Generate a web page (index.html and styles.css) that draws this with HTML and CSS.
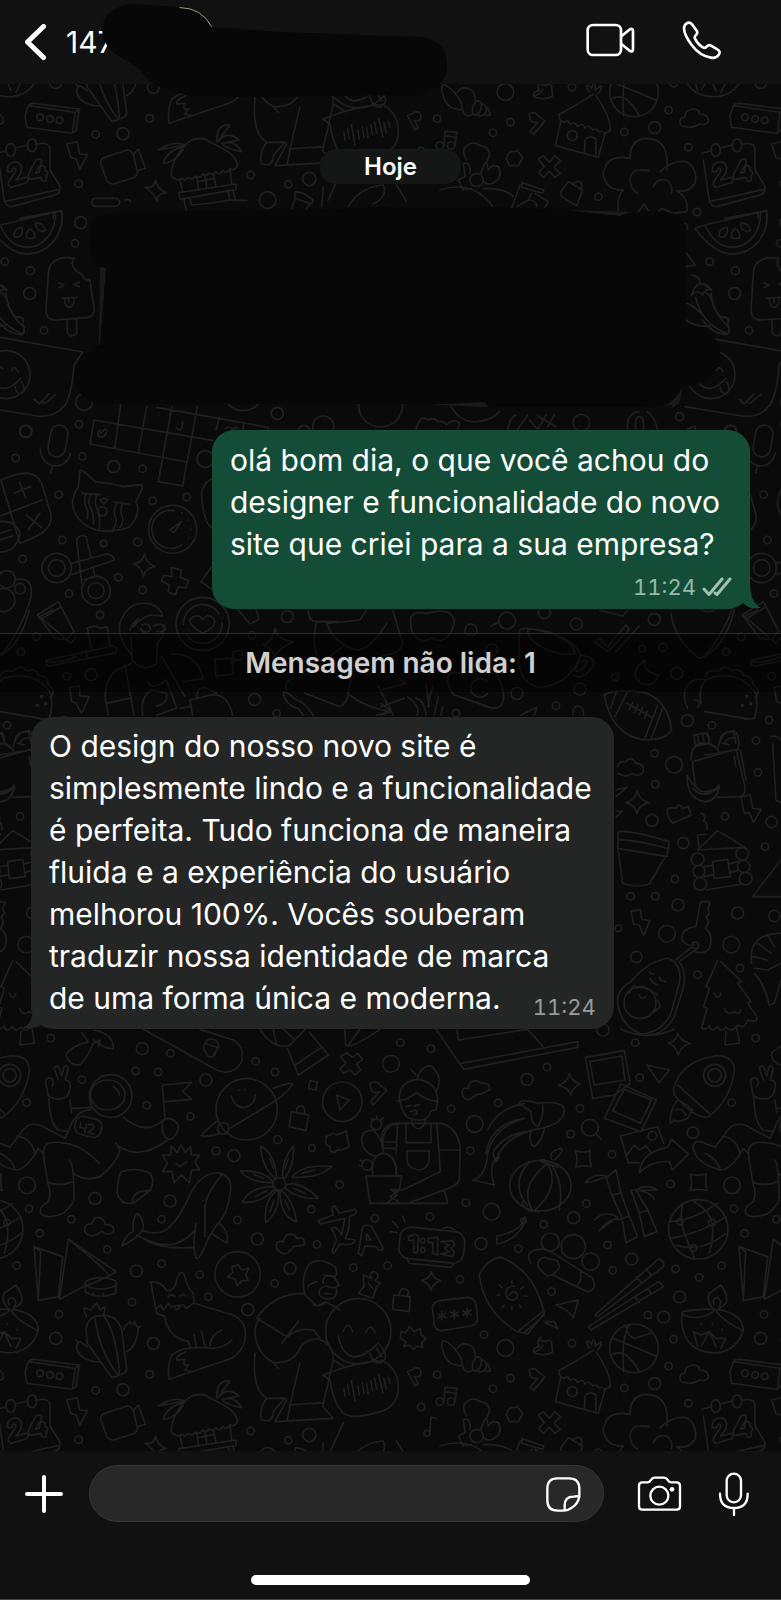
FILE: index.html
```html
<!DOCTYPE html>
<html lang="pt-BR">
<head>
<meta charset="utf-8">
<meta name="viewport" content="width=device-width, initial-scale=1">
<title>Conversa</title>
<link rel="stylesheet" href="styles.css">
</head>
<body>
<header class="topbar">
  <button class="back" type="button" aria-label="Voltar">
    <svg class="icon-back" viewBox="0 0 21 36"><path d="M18.500 2.500L2.500 18l16 15.500"/></svg>
    <span>147</span>
  </button>
  <svg class="cover-name" viewBox="0 0 360 100" aria-hidden="true">
    <path class="ink" d="M3 25C6 11 20 5 32 4L80 7Q103 9 112 27L180 32L320 37C341 39 348 52 347 68C346 83 334 93 310 95L150 97C80 97 58 92 44 75C39 67 31 64 22 58C7 49 0 39 3 25z"/>
    <path class="arc" d="M80 7.500Q102 8 111.500 26.500"/>
  </svg>
  <nav class="calls">
    <button type="button" aria-label="Chamada de vídeo"><svg class="icon-video" viewBox="438 66 153 108"><rect x="446" y="75" width="100" height="90" rx="16"/><path d="M547 109L573 88Q582 84 582 94V146Q582 157 573 153L547 132"/></svg></button>
    <button type="button" aria-label="Chamada de voz"><svg class="icon-phone" viewBox="723 60 123 123"><path d="M740 70Q749 65 756 73L770 92Q774 98 769 104Q762 111 765 116Q773 133 790 143Q796 146 801 139Q806 133 813 137L833 149Q842 154 837 163Q829 176 813 173Q780 168 755 135Q728 99 733 79Q735 73 740 70z"/></svg></button>
  </nav>
</header>

<main class="chat">
  <svg class="wallpaper" aria-hidden="true">
    <defs>
      <g id="tile">
        <g transform="translate(0 200) scale(.3333)">
          <path d="M0 75L184 32Q194 80 160 125Q125 165 75 162Q25 158 -30 85L0 75Q20 120 50 135Q80 147 110 137Q165 110 167 38M42 106Q45 80 67 83Q70 110 50 112Q43 112 42 106zM80 112Q77 92 91 86Q108 99 103 113Q91 120 80 112zM106 70Q128 65 137 90Q122 100 110 85z"/>
          <path d="M222 175C180 168 147 180 145 220L138 330Q138 360 170 360L260 353Q285 350 282 325L270 240Q252 242 244 222Q220 212 216 190zM201 360L202 398Q214 418 230 398V358M176 248L192 256L176 263M238 246L222 253L238 260M186 294L232 292M193 294Q194 322 208 322Q224 320 222 294M207 295V308"/>
          <path d="M0 255L20 270M0 277Q13 280 20 300Q35 350 70 380Q78 400 62 404Q20 400 -8 360M45 352Q70 345 70 365"/>
          <path d="M0 412L248 456L222 496Q216 580 195 615Q165 655 110 648L-60 620M103 598L118 612L146 582M126 606L136 610L166 584"/><circle cx="18" cy="524" r="72"/>
          <path d="M0 500L8 506M34 512Q44 494 54 515M-24 545Q15 590 62 535M45 560Q50 585 65 580Q80 570 64 545"/>
          <rect x="148" y="675" width="52" height="96" rx="26" transform="rotate(10 174 723)"/><path d="M121 745Q122 790 163 798Q200 800 211 760M157 798L152 820"/>
          <path d="M282 660L640 722M270 732L560 786M282 660L270 735M362 615L344 745M440 620L415 758M516 618L475 845L548 858L592 620M470 622L805 682V690M658 652L648 690M732 668L728 690M302 700C320 680 326 685 314 708C296 720 286 700 302 690M530 684Q545 700 548 670V664M675 686Q690 675 698 690Q708 675 716 688"/>
          <path d="M-10 845Q60 815 85 820Q115 825 125 850L152 940Q160 975 125 1000Q90 1020 60 1030L4 845M-4 950L126 900M42 880L92 860M58 846L77 893M78 945L124 982M120 940L84 990M0 965Q45 960 60 1000Q50 1055 0 1056M0 1000L32 990M0 1020L38 1008"/>
          <path d="M240 812Q245 805 285 845Q330 850 370 860L425 854Q433 858 408 905Q425 940 388 982Q330 1000 290 990Q225 970 217 910Q220 880 235 862zM246 880L300 884M258 880Q250 905 258 920T262 955M270 884Q262 910 272 925T280 972M290 885Q282 910 292 930T298 985M340 906L388 912M350 908Q338 935 346 950T340 988M368 910Q358 935 366 950T360 982M300 900Q315 890 322 900L312 912z"/><circle cx="307" cy="934" r="14"/>
          <circle cx="518" cy="988" r="72"/><path d="M522 932A57 57 0 1 0 545 1035M510 990L545 964L522 998zM545 938v1M565 960v1M572 988v1M564 1014v1"/>
          <circle cx="170" cy="1104" r="44"/><circle cx="170" cy="1104" r="25"/><circle cx="288" cy="1172" r="43"/><circle cx="288" cy="1172" r="24"/><path d="M215 1090L320 1062Q342 1065 343 1080L215 1124M245 1150L230 1020Q240 1000 258 1010L272 1070M246 1140L285 1130L280 1106"/>
          <path d="M434 1062Q438 1090 465 1100Q438 1105 430 1128Q425 1098 400 1092Q428 1088 434 1062zM514 1103L545 1110L540 1132L566 1142L558 1164L535 1160L526 1184L504 1176L508 1155L484 1142L492 1126L516 1130z"/>
          <circle cx="20" cy="1138" r="26"/><circle cx="60" cy="1166" r="16"/><circle cx="10" cy="1200" r="35"/><path d="M50 1138Q100 1130 93 1190Q80 1250 30 1330Q10 1360 0 1362M640 835Q605 850 605 885Q610 970 637 985M634 1102L603 1145L640 1170"/>
          <circle cx="242" cy="68" r="18"/><circle cx="225" cy="130" r="11"/><circle cx="14" cy="185" r="11"/><circle cx="91" cy="212" r="12"/><circle cx="89" cy="280" r="18"/><circle cx="132" cy="391" r="11"/><circle cx="252" cy="606" r="25"/><circle cx="76" cy="694" r="18"/><circle cx="237" cy="673" r="11"/><circle cx="247" cy="769" r="11"/><circle cx="47" cy="774" r="11"/><circle cx="341" cy="800" r="18"/><circle cx="428" cy="806" r="11"/><circle cx="616" cy="777" r="25"/><circle cx="176" cy="884" r="11"/><circle cx="458" cy="902" r="11"/><circle cx="560" cy="891" r="11"/><circle cx="187" cy="1020" r="11"/><circle cx="311" cy="1030" r="10"/><circle cx="413" cy="1026" r="12"/><circle cx="68" cy="1077" r="11"/><circle cx="355" cy="1132" r="11"/><circle cx="207" cy="1181" r="11"/><circle cx="428" cy="1170" r="11"/><circle cx="832" cy="640" r="18"/><circle cx="970" cy="680" r="32"/><circle cx="730" cy="570" r="62"/><circle cx="1142" cy="615" r="66"/><circle cx="912" cy="694" r="18"/>
        </g>
        <g transform="translate(381 200) scale(.3333)">
          <path d="M913 155L943 195L915 200M932 226Q955 225 958 250Q940 255 932 286Q950 265 965 285Q970 265 992 270Q985 255 958 250M944 292Q960 370 1040 402Q1050 395 1040 370M990 280Q995 330 1020 352M915 310Q930 310 960 340M915 360Q950 385 990 376M1020 352Q1045 350 1042 366M909 70Q920 68 920 88M875 620Q890 610 897 590"/>
          <circle cx="896" cy="650" r="12"/><circle cx="601" cy="668" r="25"/><circle cx="1050" cy="694" r="18"/><path d="M105 688Q120 640 140 660Q160 650 170 665Q190 660 195 675Q220 655 235 668L230 690M205 610Q235 670 290 665Q335 660 355 635M380 688Q385 655 405 645M410 688L440 645M445 660L470 688L495 645M470 648L525 680M520 645L500 680M740 688Q735 640 775 635M765 688Q760 650 775 650Q790 650 788 688M800 635Q820 650 830 688M920 688L942 678V688"/>
        </g>
        <g transform="translate(0 600) scale(.3333)">
          <path d="M112 45L175 5L222 95L200 118L165 115zM122 58L184 20M200 118L212 130L228 112"/>
          <path d="M395 165Q350 110 360 70Q380 5 440 10Q480 15 488 48L450 45Q420 55 400 80L415 55Q395 75 390 90M393 110L397 180Q430 220 470 190L472 130Q495 110 492 75M425 75Q450 65 452 90Q430 105 422 85M460 78Q485 65 497 85Q490 100 470 92M260 85L282 78L300 85L322 80L330 140M262 85L275 150M140 180L340 138Q355 145 348 158L150 198Q132 195 140 180zM258 152L262 178"/>
          <circle cx="608" cy="72" r="80"/><circle cx="608" cy="72" r="58" stroke-dasharray="150 30"/><path d="M608 100Q550 65 580 50Q600 42 608 60Q620 40 638 52Q660 75 608 100z"/>
          <path d="M325 345L315 290Q320 230 350 210L395 190M375 195L402 345M320 310L388 295M485 170L555 290M515 162Q590 160 610 235L550 245M540 325L570 320M445 245Q450 270 485 250L500 240L530 325L470 345M428 345Q420 290 455 270L500 280Q505 310 470 318M570 300L640 283Q685 285 698 345M570 300L578 345M590 298Q590 255 620 265L650 280M208 262L238 258L240 288L268 290L245 340L228 310L215 305z"/>
          <path d="M645 178L695 175L700 222L648 228zM700 155L726 150L727 178L700 182zM715 30L750 72L778 58L760 5M825 85Q832 120 880 125Q835 145 825 170Q815 140 790 135Q820 120 825 85zM925 30Q925 65 950 65L1010 65M950 65Q930 150 965 185L1030 140M1160 70Q1110 150 1070 150Q1000 130 980 70L1080 60L1100 30M850 280Q860 320 895 325L910 346M850 275Q870 280 880 295Q920 310 940 346M860 270Q850 245 880 235M915 280L1020 320Q1045 310 1045 270Q1060 240 1040 215M1050 285Q1090 320 1170 335L1130 345M1135 260L1180 345"/>
          <path d="M0 230Q10 205 40 215Q60 190 80 212Q110 205 115 225Q145 230 145 255Q170 270 152 290Q160 320 148 355L120 358M0 240Q60 215 110 240Q150 265 155 290M0 335L120 355M0 400Q20 410 10 430L35 445M45 425Q45 395 85 395Q90 405 92 430M60 430Q65 410 92 415M0 465L92 450M0 580Q30 575 42 555Q40 600 0 606M92 500L88 470"/>
          <circle cx="300" cy="45" r="11"/><circle cx="109" cy="110" r="11"/><circle cx="62" cy="156" r="11"/><circle cx="200" cy="229" r="11"/><circle cx="273" cy="224" r="18"/><circle cx="21" cy="376" r="11"/><circle cx="60" cy="649" r="11"/><circle cx="764" cy="298" r="18"/><circle cx="830" cy="340" r="11"/><circle cx="862" cy="50" r="18"/><circle cx="756" cy="106" r="11"/><circle cx="125" cy="290" r="3"/><circle cx="112" cy="316" r="3"/><circle cx="137" cy="311" r="3"/>
        </g>
        <g transform="translate(381 600) scale(.3333)">
          <path d="M35 30L65 130Q60 155 35 160L0 170M90 70Q80 30 140 40Q210 20 220 60Q215 110 180 122L150 115L125 125Q85 105 90 70zM355 65L330 78M415 92Q420 78 500 95Q580 120 600 165Q570 250 480 262Q425 255 415 200zM440 90Q455 82 520 105Q580 130 582 160Q540 170 490 145Q440 120 440 90zM600 165Q650 175 635 200Q600 245 580 225M590 190Q615 175 620 185Q600 220 582 212zM640 125L655 115L680 140L735 75L745 88L680 155zM705 155L775 78M655 30L725 48L740 30M870 40Q880 120 955 175Q1030 150 1060 30M1090 50L1165 112M1090 50L1130 30M1110 185Q1150 190 1200 170"/>
          <path d="M200 235Q205 210 240 220Q300 205 350 225Q380 290 360 318Q340 330 320 320L220 285Q200 270 200 235zM318 245A28 28 0 1 0 320 280M0 270L75 250L60 240M0 320L70 295M80 290Q120 320 108 345M105 295Q130 300 135 345M155 260Q140 310 142 320M135 255L145 320M172 290L160 345M185 320L180 345M420 345L468 322L460 345M575 345Q575 318 592 318Q608 320 608 345M0 310L30 335L0 345"/>
          <path d="M792 180Q785 215 832 225Q820 265 780 250Q740 220 792 180zM670 285Q700 265 790 278Q860 300 872 390Q850 425 780 418Q690 400 670 285zM705 278L688 325M740 275L702 350M830 315L792 415M845 325L810 418M738 310L812 352M745 328L755 308M760 338L770 315M775 345L785 322M790 355L800 332M978 240Q950 260 960 310M920 325Q900 285 920 255Q940 230 978 240M938 300Q965 300 950 322"/>
          <path d="M710 500Q715 480 735 485Q750 465 765 490Q790 490 787 515Q775 535 755 520Q735 535 710 520M705 570L738 562L705 590M705 630Q715 640 725 632L705 652M768 572Q775 600 803 608Q775 615 768 640Q762 615 735 608Q762 602 768 572zM860 628Q870 620 885 625Q890 605 905 625L922 620L930 645L875 670Q855 645 860 628zM712 695Q750 690 865 725L858 770L710 745zM712 750L725 850Q765 865 805 852L850 775M710 718Q780 722 858 745"/>
          <path d="M935 485L1065 448L1092 560Q1095 590 1070 590L1010 592M935 485Q935 510 945 560M930 480Q930 440 955 430L985 430Q1010 440 1015 460M938 405L980 398L985 430L945 438zM950 405L955 435M965 402L970 432M1012 440Q1020 395 1060 392Q1080 410 1070 450M1025 430L1045 435M1078 450L1095 540M918 525Q918 600 975 605Q1010 600 1015 560Q1000 570 975 575Q950 580 918 525zM935 565Q970 600 1010 565M1080 592L1108 585L1115 625L1140 628L1118 668L1105 638L1090 640zM962 640Q978 650 968 662Q980 670 978 690M950 705L975 703M950 705L955 750M950 750L1010 692L1092 742zM995 785L1040 778L1048 830L1000 836zM970 800L995 796M1045 792L1070 785M970 830L998 824M1045 818L1070 812M975 870L1085 852M1115 890L1200 780M1115 890H1200M1170 410Q1190 405 1200 420M1175 430L1185 600L1200 608"/>
          <circle cx="950" cy="778" r="19"/><circle cx="954" cy="814" r="18"/><circle cx="958" cy="852" r="19"/><circle cx="1084" cy="761" r="19"/><circle cx="1088" cy="799" r="19"/><circle cx="1094" cy="836" r="19"/>
          <path d="M750 935L778 928L782 958L807 962L788 1006L775 976L758 972zM958 908Q970 900 988 908L980 925L986 940L976 950L983 965L974 985M958 908L945 980M945 980Q900 985 903 1020Q920 1040 930 1035M974 985Q1000 1010 985 1045Q970 1065 940 1055M940 1035L885 1080M950 1045L895 1085"/><circle cx="943" cy="1036" r="10"/>
          <path d="M710 1210Q705 1170 750 1145Q800 1085 860 1075Q905 1090 895 1150L870 1240Q840 1300 780 1302Q720 1280 710 1210zM895 1085Q920 1120 905 1170L880 1250Q850 1305 800 1305M805 1115Q810 1125 820 1122M808 1135Q812 1150 830 1155M835 1132Q838 1145 855 1145M745 1180Q760 1145 765 1165Q790 1155 830 1185M830 1200L838 1220L820 1235M775 1185Q780 1200 795 1190"/><circle cx="777" cy="1208" r="48"/>
          <path d="M1010 1082L975 1160L985 1165L968 1220L978 1225L962 1285Q975 1290 985 1278Q990 1300 1010 1280Q1020 1300 1035 1282Q1055 1300 1070 1275Q1090 1290 1100 1260Q1130 1270 1128 1250L1100 1210L1110 1205L1070 1150L1082 1145L1020 1085M1000 1180Q1010 1205 1020 1180M1030 1225Q1040 1250 1060 1235Q1070 1248 1080 1230M1035 1295L1032 1335L1075 1330L1068 1285M1112 1090Q1100 1000 1200 1000M1115 1070L1160 1080M1130 1030L1170 1060M1160 1005L1180 1040M1120 1105L1160 1110L1200 1090M1120 1120Q1150 1150 1165 1215L1180 1210L1200 1140M890 1300Q900 1325 928 1330Q900 1338 892 1365Q885 1335 862 1330Q885 1325 890 1300z"/>
          <circle cx="378" cy="62" r="25"/><circle cx="270" cy="90" r="18"/><circle cx="490" cy="38" r="18"/><circle cx="586" cy="72" r="18"/><circle cx="820" cy="58" r="18"/><circle cx="784" cy="146" r="10"/><circle cx="845" cy="142" r="12"/><circle cx="887" cy="220" r="18"/><circle cx="703" cy="231" r="11"/><circle cx="1036" cy="155" r="11"/><circle cx="408" cy="280" r="18"/><circle cx="597" cy="267" r="18"/><circle cx="525" cy="317" r="11"/><circle cx="225" cy="340" r="11"/><circle cx="332" cy="150" r="18"/><circle cx="919" cy="362" r="18"/><circle cx="821" cy="460" r="11"/><circle cx="879" cy="494" r="25"/><circle cx="823" cy="553" r="11"/><circle cx="813" cy="661" r="18"/><circle cx="907" cy="729" r="17"/><circle cx="882" cy="837" r="11"/><circle cx="749" cy="889" r="11"/><circle cx="823" cy="889" r="11"/><circle cx="891" cy="915" r="18"/><circle cx="858" cy="1001" r="25"/><circle cx="766" cy="1071" r="17"/><circle cx="1070" cy="939" r="18"/><circle cx="1051" cy="1034" r="25"/><circle cx="1077" cy="1104" r="11"/><circle cx="950" cy="1124" r="11"/><circle cx="712" cy="985" r="10"/><circle cx="1125" cy="422" r="11"/><circle cx="1131" cy="517" r="11"/><circle cx="1172" cy="666" r="17"/><circle cx="1152" cy="740" r="11"/><circle cx="1180" cy="948" r="17"/><circle cx="1164" cy="360" r="11"/>
        </g>
        <g transform="translate(0 1020) scale(.3333)">
          <path d="M245 38L265 65Q210 80 198 105Q210 140 240 134Q265 110 280 70L300 60L295 80M280 30Q340 40 340 85Q320 90 280 60M430 28L650 150Q700 170 725 125Q735 80 700 60L600 28M610 85L625 110Q645 115 648 95M610 85Q620 50 640 58Q660 65 655 82L640 105M620 72L650 82"/>
          <path d="M780 28Q820 90 870 75L915 28M820 28L830 75M850 28L885 60M862 85L895 165L985 105L930 38M885 135L968 80M1035 28L1037 75Q1050 90 1140 28M1080 28L1045 75M1040 98L1058 112L1072 100L1088 118L1070 132L1082 150L1066 165L1050 150L1030 160L1020 146L1038 130L1022 110z"/>
          <path d="M145 230L138 190Q135 170 155 175Q165 190 155 200M175 180L163 145Q168 130 178 145L185 168L192 140Q205 132 204 150L196 180Q215 180 210 205Q205 240 170 237Q150 235 145 225M147 235Q148 310 175 330M210 240L215 278M215 265L275 262M175 330L205 335M0 370L30 382L62 340Q80 305 120 315L195 355L215 310Q235 270 275 268M52 348Q95 355 105 400M0 400Q40 420 45 450Q80 450 115 385L130 400M0 370Q-30 355 -36 380Q-30 430 45 450M130 400Q130 360 180 368Q240 370 298 430M130 400Q135 440 145 495Q155 520 145 545Q115 560 122 580Q140 600 190 580Q225 550 222 530L220 460Q215 425 208 420M145 488Q180 500 220 485M222 462Q260 485 300 470Q350 430 360 390L346 368M350 375Q420 425 502 360M370 292Q440 350 490 300M487 195L575 187L548 215L575 238L495 245M487 195L495 295"/><circle cx="332" cy="228" r="64"/><ellipse cx="323" cy="225" rx="52" ry="45"/><path d="M340 200Q358 210 358 226M487 315Q485 295 505 295Q535 300 535 325Q525 360 505 358Q485 350 487 315"/><rect x="225" y="293" width="80" height="55" rx="22" transform="rotate(14 265 320)"/><path d="M242 308L240 322L256 326M260 312L254 338M266 314Q285 310 280 325L264 338L282 342"/>
          <path d="M543 375L555 398L572 380L574 405L598 405L585 425L598 450L575 450L568 488L545 465L522 488L516 455L488 455L502 430L487 405L512 405L514 378L532 398zM528 430L540 440L560 426M365 455Q410 440 450 460Q465 480 452 510L400 550Q360 555 352 520Q352 470 365 455zM398 550Q395 510 450 512"/>
          <circle cx="740" cy="268" r="92"/><circle cx="670" cy="325" r="17"/><path d="M694 228Q705 265 735 262Q765 255 766 225M716 210v1M734 208v1M820 205Q875 185 877 192Q870 210 830 240L690 325M652 303Q600 345 605 348Q640 350 660 340M874 275L926 285L918 332L868 320zM890 275Q888 258 905 258Q918 262 912 280M930 182L952 186L948 210L925 206z"/>
          <circle cx="1027" cy="245" r="59"/><path d="M1010 225L1048 240L1020 270zM1110 190Q1130 180 1140 195L1160 210L1120 255L1112 245L1138 215Q1115 225 1112 200zM978 350L990 345Q1000 335 1010 345L1038 333L1048 380L1025 390Q1010 385 1005 398L992 395L990 380Q972 375 978 360z"/>
          <circle cx="1129" cy="313" r="16"/><path d="M1115 296L1122 301M1130 288V296M1150 294L1142 301M1150 400Q1150 360 1120 330Q1085 330 1085 360Q1090 400 1125 408M1150 395Q1140 310 1200 312M1155 366H1190M1118 468Q1110 400 1155 400Q1190 410 1190 468M1098 468H1200M1098 468L1110 550H1200M1175 510L1195 515L1170 530L1195 545M1080 420L1090 425M1078 438H1088"/><circle cx="1102" cy="435" r="16"/>
          <path d="M365 678Q380 640 400 635Q395 600 412 580Q435 600 428 632Q480 650 510 620Q540 590 560 545Q600 450 660 460Q700 470 690 520Q685 580 650 615L625 655Q600 720 590 715Q575 690 588 610M428 632Q410 655 365 678M430 655Q480 690 580 682M410 645Q520 710 585 630M615 575Q610 530 665 465M615 575V650M660 612Q690 640 680 670L635 640M610 542h1"/>
          <circle cx="838" cy="492" r="19"/><path d="M825 475Q785 440 782 378Q825 400 830 475zM848 472Q845 420 880 378Q885 430 855 475zM875 472Q910 430 995 440Q960 475 875 472zM858 495Q900 480 955 535Q900 540 855 505zM845 512Q880 540 890 605Q840 590 840 512zM828 512Q790 545 797 608Q840 575 835 512zM820 500Q750 500 727 547Q790 550 825 505zM820 485Q790 450 722 453Q750 490 820 488zM810 415L820 445M865 415L855 445M905 460L945 450M760 462L790 475M765 530L800 512M810 575L822 540M868 570L855 540M880 505L915 520"/>
          <path d="M255 635Q250 610 275 612Q285 580 310 600Q318 610 315 615Q345 610 340 635Q325 650 305 635Q270 660 255 635zM830 685Q825 660 850 665Q855 635 885 645L890 655Q920 650 912 675L880 680Q855 720 830 685zM955 602L1000 585Q990 560 1005 558L1018 580L1065 568Q1075 575 1065 582L1048 590Q1050 630 1035 655L1065 660Q1065 678 1020 672L1002 700Q990 700 1010 660L995 625Q1010 615 1025 645L1035 595L960 612zM1075 700L1088 620Q1105 610 1115 620L1150 685Q1140 700 1128 680L1095 678L1085 708zM1098 660L1100 640L1112 660z"/>
          <circle cx="713" cy="763" r="68"/><path d="M715 735L725 750L745 745L738 765L745 782L725 782L712 797L705 778L683 770L698 758L696 740z"/>
          <path d="M102 680L188 710L175 830L115 842zM102 680L122 695L115 840M205 658L348 755Q320 775 250 800L178 838zM205 658Q310 740 325 765"/><ellipse cx="303" cy="790" rx="47" ry="17"/><path d="M256 790V815Q290 840 348 820V790M280 818V826M310 820V828"/>
          <path d="M452 785L470 880L495 890M452 785Q485 785 500 812Q525 815 530 780Q545 735 558 780Q560 800 580 820L582 850L700 885Q745 910 735 960Q720 1010 680 1020L508 1078Q500 1040 515 1005Q550 975 640 985Q680 980 695 960M495 890Q500 950 565 965L570 985M590 985L582 945M615 980L605 935M630 980Q630 945 665 930M558 995Q530 1005 530 1020L555 1018Q545 1040 565 1035L555 1050L575 1055M470 865L482 855L490 870L505 850L515 862M520 858L545 855L530 870zM550 855L560 865L580 850M505 830Q515 820 525 830M540 828Q550 820 558 828"/>
          <path d="M770 895Q820 820 910 820L950 858L978 845L1020 870M915 825Q900 770 930 730Q960 710 1005 740Q1015 760 1005 770Q965 760 970 790M950 785Q920 795 925 800M970 765L1000 768L1018 795Q1000 810 980 798Q955 800 958 825Q975 842 1000 835Q1015 820 1008 805M940 855Q970 860 978 845M975 820L992 822M770 895L860 950L895 905M845 970Q880 920 940 930L960 955Q910 960 900 985Q880 1030 820 1028Q770 1000 765 940Q765 910 780 895M960 960Q1000 970 1000 1020L968 1160L1000 1195L825 1205L860 1140M900 1030Q870 1150 862 1200M835 1045L820 1028M765 1000Q755 1110 800 1135L860 1135M800 1135Q775 1170 785 1200Q820 1210 820 1175L850 1140M868 1155L970 1148"/>
          <circle cx="1075" cy="934" r="98"/><path d="M1030 935Q1043 895 1058 935M1098 938Q1110 905 1125 938M1015 948Q1040 1060 1135 970M1110 1000Q1120 1035 1145 1028Q1170 1010 1140 975M1130 985L1145 1010M968 1065Q1090 1020 1150 1022Q1195 1050 1195 1100Q1195 1160 1140 1175Q1060 1200 1030 1180Q1000 1150 990 1080zM1000 1020L1035 1042M1032 1105L1035 1128M1043 1095L1048 1125M1054 1082L1065 1142M1075 1100L1078 1125M1087 1088L1092 1120M1100 1090L1104 1120M1112 1082L1118 1112M1124 1075L1130 1108M1136 1062L1148 1118M1152 1075L1158 1105M1166 1072L1170 1090"/>
          <path d="M260 890Q245 860 258 865L272 870L290 850L300 870L315 860L312 885M258 930Q262 890 300 887Q350 880 365 930L380 1050Q370 1068 335 1072L262 970zM285 895Q300 1000 355 1065M312 888Q350 940 358 1060M372 930Q375 905 405 910L415 925Q410 980 380 995M388 905L392 912M405 905L402 912M422 920L412 922M262 980L240 965Q220 975 240 1005Q270 1030 298 1025M228 960L235 970M75 1055L85 1025Q90 1018 100 1018L238 1035L228 1100L215 1108L80 1090zM85 1025L225 1045L218 1105M225 1045L238 1035M200 1140L232 1133L238 1170L262 1172L240 1215L228 1185L212 1180z"/>
          <circle cx="120" cy="1060" r="10"/><circle cx="150" cy="1065" r="10"/><circle cx="179" cy="1069" r="10"/>
          <circle cx="152" cy="54" r="11"/><circle cx="427" cy="86" r="18"/><circle cx="511" cy="100" r="11"/><circle cx="407" cy="153" r="11"/><circle cx="474" cy="156" r="11"/><circle cx="246" cy="179" r="11"/><circle cx="80" cy="248" r="11"/><circle cx="440" cy="256" r="11"/><circle cx="618" cy="180" r="18"/><circle cx="571" cy="289" r="11"/><circle cx="648" cy="393" r="12"/><circle cx="702" cy="407" r="18"/><circle cx="767" cy="124" r="11"/><circle cx="825" cy="156" r="11"/><circle cx="833" cy="359" r="12"/><circle cx="936" cy="384" r="10"/><circle cx="1019" cy="494" r="11"/><circle cx="81" cy="496" r="25"/><circle cx="285" cy="535" r="18"/><circle cx="87" cy="566" r="11"/><circle cx="214" cy="598" r="11"/><circle cx="119" cy="640" r="11"/><circle cx="510" cy="543" r="18"/><circle cx="485" cy="598" r="11"/><circle cx="322" cy="688" r="11"/><circle cx="50" cy="737" r="11"/><circle cx="409" cy="753" r="18"/><circle cx="485" cy="731" r="11"/><circle cx="712" cy="600" r="11"/><circle cx="772" cy="657" r="18"/><circle cx="934" cy="568" r="11"/><circle cx="951" cy="673" r="11"/><circle cx="1125" cy="595" r="11"/><circle cx="599" cy="764" r="11"/><circle cx="625" cy="830" r="11"/><circle cx="870" cy="745" r="18"/><circle cx="824" cy="790" r="11"/><circle cx="743" cy="869" r="18"/><circle cx="396" cy="846" r="11"/><circle cx="177" cy="883" r="11"/><circle cx="167" cy="955" r="18"/><circle cx="460" cy="970" r="18"/><circle cx="449" cy="1063" r="11"/><circle cx="369" cy="1109" r="18"/><circle cx="287" cy="1111" r="11"/><circle cx="1060" cy="743" r="11"/><circle cx="1163" cy="737" r="11"/><circle cx="1173" cy="131" r="25"/>
          <path d="M1090 765L1115 775Q1105 760 1120 755Q1140 760 1132 775L1125 782L1142 790L1130 800L1118 835L1075 820L1092 800zM1105 790L1118 805"/>
        </g>
        <g transform="translate(381 1020) scale(.3333)">
          <path d="M165 28L248 148L590 82V65L240 130M228 28L232 60L440 28L485 78M720 28Q800 65 880 28M613 112L730 92L748 190L700 225L635 235zM626 125L722 108L732 180L640 195zM720 192L826 240L780 335L670 295zM730 208L812 240L778 310L695 272zM798 135L865 150L835 188zM565 160Q572 185 598 192Q575 200 570 225Q560 200 532 196Q560 188 565 160z"/>
          <path d="M878 205Q900 125 1000 108Q1060 105 1060 150Q1050 240 980 292Q940 295 880 225zM890 195L985 280M890 240Q865 270 868 310L880 300Q890 310 920 295L935 270Q900 240 890 240zM885 270Q900 260 915 285"/><circle cx="1001" cy="166" r="33"/><circle cx="1001" cy="166" r="20"/>
          <path d="M55 245Q50 185 110 178Q170 185 170 245L165 270L150 272Q140 305 110 300Q65 300 58 245M48 243L75 238L108 218Q130 240 170 245M108 178Q120 135 150 138Q190 170 165 215M90 148L105 165M75 260L90 256M100 258L115 254M88 275L105 270Q115 285 98 284M92 300V310Q110 340 132 312V298M5 385Q-10 320 40 310L180 310Q230 320 238 385L235 480Q225 500 190 510L85 548M50 310L45 400M75 312V368H150V312M168 312L178 455L65 510L30 508L48 525L20 548M5 385H45M178 390H235M78 393H145V420Q140 450 112 450Q80 445 78 420zM0 400Q50 400 45 468M0 468H62L55 510M0 550H200L190 508"/>
          <path d="M245 225Q240 200 262 205Q260 180 290 183L300 190Q330 185 325 210L300 222Q285 222 278 230Q255 250 245 225zM415 250Q420 235 470 250Q545 240 550 270Q550 310 480 325Q380 340 350 410Q320 440 340 495L275 480Q315 470 320 400Q340 320 430 295Q330 310 315 400M320 330Q350 265 430 250M415 250L450 275Q450 310 470 320Q490 290 485 255M450 335Q440 370 460 380Q485 360 490 325M430 335Q360 350 335 400L345 425Q360 410 350 400"/>
          <ellipse cx="478" cy="497" rx="92" ry="76"/><path d="M445 425Q385 490 440 558M500 430Q410 500 455 572M512 435Q550 490 535 570M500 432Q540 500 460 572M483 418L535 435L530 442L480 425zM512 418Q500 395 540 385Q550 395 520 420M425 545Q420 560 445 572L472 575M432 590L425 610Q400 640 348 648V672Q410 660 435 600"/>
          <path d="M583 392Q605 400 628 392Q622 412 632 440Q610 435 585 442Q592 415 583 392zM928 462Q950 470 976 462Q972 485 978 512Q950 505 928 512Q935 485 928 462zM775 428L742 428L718 348L830 320L848 370M738 405L760 375L775 390L795 378L808 395M775 460Q780 395 860 382L872 358L922 402L875 450L865 425Q810 420 775 460zM612 488Q640 455 680 470L705 450L720 520L745 588L770 650L735 668L722 590L690 520L675 470Q640 485 612 488zM695 525L722 518M710 600L745 588M750 510L775 580L790 650L828 635L800 570L765 510L750 510zM775 580L803 570M765 510Q800 490 828 510L775 512Q815 520 820 538M640 600Q670 570 710 590L655 632Q680 600 710 595"/>
          <circle cx="952" cy="628" r="89"/><path d="M905 552Q895 600 910 640T940 712M870 605Q940 600 1010 550M940 545Q985 570 993 608T985 700M870 655Q960 640 1036 590M885 675Q960 700 1036 640"/><circle cx="897" cy="605" r="10"/><circle cx="993" cy="608" r="10"/><circle cx="937" cy="684" r="10"/>
          <rect x="55" y="628" width="195" height="95" rx="32" transform="rotate(6 152 675)"/><path d="M78 718L85 730L210 742L220 730M188 625Q200 615 222 630M35 605L52 622M65 588L72 608M28 635L48 638M82 650L102 642L112 648L110 698H98V660L84 662zM142 655L170 652V705L155 700V668H142zM180 665L215 662L222 675L210 685L220 695L215 710L178 702L205 695L190 685L205 675z"/><circle cx="125" cy="662" r="7"/><circle cx="125" cy="690" r="7"/>
          <circle cx="508" cy="666" r="27"/><circle cx="577" cy="680" r="36"/><circle cx="629" cy="725" r="26"/><path d="M450 730Q435 710 450 695Q480 680 510 695M510 695L635 775Q650 810 620 815L515 765M500 768Q460 740 475 720Q490 705 505 718Q535 715 535 740Q530 760 500 768zM590 795Q605 780 598 750M150 755Q155 775 178 782Q155 790 150 812Q145 790 122 782Q148 775 150 755z"/>
          <path d="M295 765Q320 715 360 712Q460 750 490 880L440 942L410 935Q310 880 295 765zM410 935L485 875M430 938L490 885M490 905L520 905L530 925L495 910M385 825Q400 805 410 825Q405 850 380 835Q365 800 400 798M393 782V790M355 795L362 802M428 800L420 806M348 825H356M430 828H438M370 855L364 862M393 860V868M415 855L420 862"/>
          <path d="M642 885L835 715L848 728V740L650 890zM765 770L780 788M795 745L810 765M622 920L832 785L848 800L630 930zM762 830L775 848M800 805L812 822M525 855L592 840L578 892L555 870zM38 825L88 830L85 875L35 868zM55 822Q60 800 75 808Q88 815 78 828M155 870Q150 850 175 842L262 832Q280 835 285 855L290 895Q290 915 270 918L182 932Q165 932 160 915zM182 875V900M170 882L195 893M195 880L170 895M220 870V895M208 876L232 888M232 876L208 890M258 865V890M246 872L270 884M270 870L246 885M60 935L75 938L85 920L100 935L118 925L120 945L135 955L122 968L125 982L108 978L98 988L85 975L68 980L75 965L58 955z"/>
          <path d="M182 970Q185 950 220 985Q250 1020 240 1038Q185 1035 182 970zM230 985Q240 965 265 975Q285 985 282 1010M245 1035Q250 1065 275 1052Q270 1020 290 1010Q305 1010 300 1035Q290 1060 275 1050M305 1020Q320 1025 315 1045Q300 1065 290 1050M320 1030L328 1052L315 1055M480 950Q470 960 490 965Q515 955 512 975L515 995Q500 1010 460 1000Q450 985 475 980Q465 965 480 950zM462 995Q480 990 485 975"/>
          <circle cx="759" cy="985" r="73"/><path d="M695 955Q760 980 828 1010M735 918Q740 950 760 955L810 940M745 915Q720 950 728 1055M690 1005Q735 980 775 1055"/>
          <path d="M638 990Q560 1040 535 1050Q530 1070 550 1075Q560 1065 568 1082Q580 1070 590 1088Q605 1075 612 1092Q625 1080 635 1098Q645 1090 655 1105Q665 1095 670 1110L688 1100Q690 1060 645 995M625 985L615 965Q625 960 632 975L635 960Q645 960 642 978L660 965Q665 975 650 990M540 1070L523 1145L652 1180L672 1110M610 1165L612 1130Q625 1110 645 1125L645 1175"/><circle cx="574" cy="1115" r="15"/>
          <path d="M905 875Q950 865 1000 868Q975 850 985 820L1020 795Q1045 830 1035 850L1010 868Q1085 880 1087 930Q1070 990 1010 998Q970 1000 945 985Q905 960 902 900zM1005 870Q1020 900 1085 932M905 885Q960 905 1000 872M938 935L960 945L985 935L1005 955L1035 955L1020 985M950 980L938 935M960 980L985 935L1005 980M1000 855Q990 835 1010 832Q1025 845 1015 860M960 912v1M994 910v1M1024 928v1"/>
          <path d="M897 1075Q895 1060 912 1060Q910 1040 935 1035Q955 1035 955 1050Q985 1050 982 1075Q970 1085 955 1080Q930 1095 915 1088Q900 1090 897 1075zM80 1055L90 1050Q115 1035 120 1055Q120 1075 100 1070L112 1092L102 1098zM445 1050Q460 1040 470 1055L492 1070L458 1112L448 1102L470 1075Q445 1080 445 1050zM188 1145L192 1102L228 1105L222 1145M190 1115L225 1120M146 1240L150 1192L165 1195M385 1165L410 1160L425 1182L412 1205L385 1205L376 1185zM472 1185L488 1175L505 1195L522 1175L538 1190L520 1210L538 1228L522 1240L505 1222L488 1240L472 1225L490 1208z"/><circle cx="176" cy="1145" r="11"/><circle cx="210" cy="1145" r="11"/><circle cx="138" cy="1240" r="9"/>
          <circle cx="58" cy="68" r="11"/><circle cx="150" cy="86" r="11"/><circle cx="438" cy="178" r="18"/><circle cx="498" cy="141" r="11"/><circle cx="351" cy="249" r="11"/><circle cx="211" cy="266" r="11"/><circle cx="281" cy="312" r="25"/><circle cx="268" cy="392" r="11"/><circle cx="597" cy="265" r="11"/><circle cx="569" cy="342" r="11"/><circle cx="627" cy="323" r="25"/><path d="M645 342L660 357"/><circle cx="693" cy="403" r="11"/><circle cx="763" cy="68" r="11"/><circle cx="776" cy="173" r="11"/><circle cx="666" cy="30" r="18"/><circle cx="814" cy="347" r="13"/><circle cx="936" cy="338" r="17"/><circle cx="869" cy="492" r="11"/><circle cx="255" cy="548" r="11"/><circle cx="332" cy="575" r="25"/><circle cx="147" cy="590" r="11"/><circle cx="300" cy="671" r="18"/><circle cx="412" cy="686" r="11"/><circle cx="488" cy="613" r="11"/><circle cx="578" cy="593" r="18"/><circle cx="616" cy="551" r="11"/><circle cx="680" cy="675" r="11"/><circle cx="752" cy="717" r="18"/><circle cx="695" cy="751" r="11"/><circle cx="884" cy="747" r="11"/><circle cx="955" cy="772" r="11"/><circle cx="896" cy="831" r="18"/><circle cx="848" cy="891" r="18"/><circle cx="801" cy="885" r="11"/><circle cx="878" cy="958" r="11"/><circle cx="237" cy="778" r="11"/><circle cx="512" cy="815" r="11"/><circle cx="309" cy="944" r="11"/><circle cx="373" cy="984" r="25"/><circle cx="573" cy="970" r="11"/><circle cx="168" cy="1064" r="11"/><circle cx="388" cy="1074" r="11"/><circle cx="336" cy="1106" r="11"/><circle cx="120" cy="1161" r="11"/><circle cx="821" cy="1091" r="18"/><circle cx="730" cy="1104" r="11"/><circle cx="863" cy="1038" r="11"/><circle cx="922" cy="1150" r="11"/><circle cx="428" cy="602" r="8"/>
        </g>
        <g transform="translate(0 1256) scale(.3333)">
          <path d="M-10 460L20 452M45 445L80 435M112 432Q150 425 150 450L150 510L178 555Q185 580 165 585L35 620Q15 620 12 595L-5 480M12 605L178 568M22 515Q20 488 45 486Q72 488 62 520L48 540L78 532Q90 538 80 548L35 562Q18 558 28 542L46 516Q50 502 40 504Q36 520 22 515zM108 480Q126 472 124 490L106 520L118 517L121 500Q132 492 135 505L136 513Q148 514 140 526L138 542Q128 550 122 532L92 538Q80 534 88 518z"/><ellipse cx="32" cy="450" rx="14" ry="19"/><ellipse cx="96" cy="436" rx="14" ry="19"/>
          <path d="M302 490Q300 475 320 470L380 450Q395 450 400 465L412 515Q412 530 395 535L340 552Q320 550 318 535zM400 465L415 447L436 505L415 512"/>
          <path d="M550 440Q590 400 630 425L685 455Q715 480 712 500Q700 515 690 505Q680 525 668 510Q660 530 648 515Q640 530 628 518Q618 532 608 522Q598 538 588 528Q578 542 565 532Q555 545 545 535Q530 545 515 530Q510 490 550 440zM475 450Q520 420 555 435L475 450M555 440Q500 450 490 490Q520 490 550 450M650 425Q650 370 690 375Q670 400 655 425Q680 390 718 420L665 430Q710 420 725 455Q690 450 670 435M540 540L548 575M690 508L695 552M590 530L595 565M615 525L620 560M640 520L648 558M595 545L645 535M537 578L708 552V568L540 598zM552 598L558 630M685 575L690 600L740 602M570 595L575 615Q640 610 690 600M700 575L705 598M467 540Q472 570 500 578Q470 580 472 605Q460 575 435 562Q465 565 467 540z"/>
          <rect x="275" y="595" width="84" height="24" rx="12"/><path d="M885 575L910 580L940 600L935 612L885 595zM885 598L875 625M930 612L920 625M60 655L185 632V655M160 640V655M965 620L970 560M985 600L1030 500M1045 620Q1080 560 1150 555Q1165 590 1120 612M1190 555L1220 605"/>
          <circle cx="236" cy="551" r="11"/><circle cx="752" cy="525" r="11"/><circle cx="865" cy="553" r="11"/><circle cx="928" cy="537" r="20"/><circle cx="803" cy="600" r="25"/><path d="M375 600Q385 595 392 605"/>
        </g>
        <g transform="translate(440 1256) scale(.3333)">
          <path d="M80 480Q62 450 80 438Q100 420 118 436Q150 440 148 468Q145 480 132 495L122 520M70 490Q95 485 90 520M70 490L75 530L55 540L70 570L95 565M125 515Q130 490 140 490L145 510Q155 490 175 500Q190 530 165 545Q150 560 130 545M0 570Q60 550 110 575Q150 600 160 625M130 565Q200 565 220 590M245 548L312 570L308 580L245 562zM240 555L215 625M275 580L265 600L230 620M285 580L325 605L315 622M265 600Q290 600 290 620M362 575L385 545L428 570L410 618L365 590zM400 555Q405 540 420 545Q432 555 420 568"/><circle cx="110" cy="540" r="20"/><circle cx="475" cy="590" r="11"/><circle cx="771" cy="636" r="11"/>
          <path d="M570 475Q570 415 625 415Q690 420 680 510M570 475Q500 460 490 520Q495 570 550 570M660 515Q695 480 740 485Q775 510 765 550Q745 580 710 572M625 512Q570 500 570 545Q575 570 592 580M640 560Q650 535 680 540Q700 555 695 578M550 570Q530 590 535 630M710 572Q750 600 740 635L700 640L665 625L650 640M592 640L612 612L625 632"/>
        </g>
      </g>
    </defs>
    <g class="doodles">
      <use href="#tile" y="-84"/><use href="#tile" x="705" y="-84"/><use href="#tile" x="-705" y="-84"/>
      <use href="#tile" y="-1340"/><use href="#tile" x="705" y="-1340"/><use href="#tile" x="-705" y="-1340"/>
    </g>
  </svg>

  <time class="day">Hoje</time>
  <svg class="cover-message" viewBox="0 206 781 202" preserveAspectRatio="none" aria-hidden="true">
    <path class="sliver" d="M100 266L106 268L101 345L99 345zM570 210L630 212L618 217zM430 402L485 400L488 407L440 405zM664 406Q677 400 683 386L679 404z"/>
    <path class="ink" d="M90 225Q98 211 130 212L330 210Q440 202 570 211L620 216Q650 208 672 213Q686 217 686 235V325Q713 328 719 345Q724 365 705 381Q690 388 680 387Q675 407 640 407H510Q490 407 484 402L440 404H100Q75 400 75 375Q76 355 92 350L100 345L106 268L95 266Q87 250 90 225z"/>
  </svg>

  <article class="bubble sent">
    <p>olá bom dia, o que você achou do<br>designer e funcionalidade do novo<br>site que criei para a sua empresa?</p>
    <footer class="meta"><time>11:24</time><svg class="ticks" viewBox="0 0 30 20"><path d="M2 12L7 17.500L20 2M13 16L15 17.500L28 2"/></svg></footer>
    <svg class="tail" viewBox="0 0 18 28"><path d="M0 0H7C7 12 9 22 18 27C11 28 5 27 0 22z"/></svg>
  </article>

  <div class="unread">Mensagem não lida: 1</div>

  <article class="bubble received">
    <p>O design do nosso novo site é<br>simplesmente lindo e a funcionalidade<br>é perfeita. Tudo funciona de maneira<br>fluida e a experiência do usuário<br>melhorou 100%. Vocês souberam<br>traduzir nossa identidade de marca<br>de uma forma única e moderna.</p>
    <time class="stamp">11:24</time>
    <svg class="tail" viewBox="0 0 18 28"><path d="M0 0H7C7 12 9 22 18 27C11 28 5 27 0 22z"/></svg>
  </article>
</main>

<footer class="composer">
  <div class="row">
    <button type="button" aria-label="Anexar"><svg class="icon-plus" viewBox="0 0 38 38"><path d="M19 2V36M2 19H36"/></svg></button>
    <div class="field">
      <input type="text" aria-label="Mensagem">
      <button type="button" aria-label="Figurinhas"><svg class="icon-sticker" viewBox="138 108 108 108"><path d="M175 115H210Q241 115 241 146V170Q236 192 220 202Q207 212 192 212H175Q145 212 145 181V146Q145 115 175 115zM197 211V196Q197 170 223 170L241 168"/></svg></button>
    </div>
    <button type="button" aria-label="Câmera"><svg class="icon-camera" viewBox="414 106 135 111"><path d="M430 128H446Q452 128 455 122Q460 114 467 114H495Q502 114 507 122Q510 128 516 128H533Q543 128 543 138V200Q543 210 533 210H430Q420 210 420 200V138Q420 128 430 128z"/><circle cx="481" cy="168" r="27"/><circle class="dot" cx="519" cy="149" r="7"/></svg></button>
    <button class="record" type="button" aria-label="Gravar áudio"><svg class="icon-mic" viewBox="654 93 96 132"><rect x="680" y="98" width="43" height="86" rx="21.500"/><path d="M660 158Q660 201 702 201Q743 201 743 158M702 202V222"/></svg></button>
  </div>
  <div class="home-bar"></div>
</footer>
</body>
</html>
```
FILE: styles.css
```css
* { box-sizing: border-box; }

body {
  margin: 0;
  min-height: 100vh;
  display: flex;
  flex-direction: column;
  background: #0a0a0a;
  color: #fff;
  font-family: Inter, "Liberation Sans", sans-serif;
}

button {
  flex: none;
  display: flex;
  align-items: center;
  padding: 0;
  border: 0;
  background: none;
  color: inherit;
  font: inherit;
}

svg { display: block; fill: none; stroke-linecap: round; stroke-linejoin: round; }
p { margin: 0; }

.topbar {
  position: relative;
  z-index: 1;
  display: flex;
  align-items: center;
  justify-content: space-between;
  height: 84px;
  padding: 0 59px 0 25px;
  background: #111;
}
.back { gap: 20px; font-size: 30px; }
.icon-back { width: 21px; height: 36px; stroke: #fff; stroke-width: 5; }
.cover-name { position: absolute; left: 100px; top: 0; width: 360px; height: 100px; }
.ink { fill: #070707; }
.arc { stroke: #a89880; stroke-width: 1; }
.calls { display: flex; align-items: center; gap: 45px; padding-bottom: 4px; }
.calls svg { stroke: #fff; stroke-width: 8; }
.icon-video { width: 51px; height: 36px; }
.icon-phone { width: 41px; height: 41px; }

.chat {
  position: relative;
  flex: 1;
  display: flex;
  flex-direction: column;
  padding: 65px 0 0;
}
.wallpaper { position: absolute; inset: 0; width: 100%; height: 100%; }
.doodles { stroke: #202020; stroke-width: 5; }
.chat > :not(.wallpaper) { position: relative; }

.day {
  align-self: center;
  padding: 0 44px;
  border-radius: 16px;
  background: #141716;
  font-size: 24px;
  font-weight: 600;
  line-height: 35px;
}
.cover-message { width: 100%; height: 202px; margin-top: 22px; }
.sliver { fill: #1a1a1a; }

.bubble {
  width: fit-content;
  border-radius: 22px;
  font-size: 30px;
  line-height: 42px;
}
.sent {
  align-self: flex-end;
  margin: 22px 31px 24px;
  padding: 9px 18px 0;
  background: #144d37;
}
.sent p { padding-right: 12px; }
.received {
  align-self: flex-start;
  margin: 25px 31px;
  padding: 8px 22px 10px 18px;
  background: #242626;
}
.meta {
  display: flex;
  justify-content: flex-end;
  align-items: center;
  gap: 6px;
  height: 44px;
  color: #98b8aa;
  font-size: 22px;
  font-variant-numeric: tabular-nums;
}
.ticks { width: 30px; height: 20px; stroke: #a2c0b3; stroke-width: 3; }
.stamp {
  position: absolute;
  right: 18px;
  bottom: 8px;
  color: #9a9b9b;
  font-size: 22px;
  font-variant-numeric: tabular-nums;
  line-height: 28px;
}
.tail { position: absolute; bottom: 0; width: 18px; height: 28px; }
.sent .tail { right: -11px; fill: #144d37; }
.received .tail { left: -8px; fill: #242626; transform: scaleX(-1); }

.unread {
  padding: 0 16px;
  border-top: 1px solid #2c2c2c;
  background: rgba(0, 0, 0, .45);
  color: #d0d0d0;
  font-size: 28px;
  font-weight: 600;
  line-height: 58px;
  text-align: center;
}

.composer {
  padding: 14px 0 14px;
  border-bottom: 1px solid #444;
  background: #111;
}
.row { display: flex; align-items: center; padding: 0 31px 0 25px; }
.row svg { stroke: #fff; }
.icon-plus { width: 38px; height: 38px; stroke-width: 4; }
.field {
  flex: 1;
  min-width: 0;
  display: flex;
  align-items: center;
  height: 57px;
  margin: 0 33px 0 26px;
  padding: 0 22px 0 26px;
  border: 1px solid #353535;
  border-radius: 29px;
  background: #282828;
}
.field input {
  flex: 1;
  width: 100%;
  min-width: 0;
  border: 0;
  outline: 0;
  background: none;
  color: #fff;
  font: inherit;
  font-size: 30px;
}
.record { margin-left: 36px; }
.icon-sticker { width: 36px; height: 36px; stroke-width: 7; }
.icon-camera { width: 45px; height: 37px; stroke-width: 7; }
.icon-camera .dot { fill: #fff; stroke: none; }
.icon-mic { width: 32px; height: 44px; stroke-width: 7; }
.home-bar {
  width: 279px;
  height: 10px;
  margin: 53px auto 0;
  border-radius: 5px;
  background: #fff;
}
```
